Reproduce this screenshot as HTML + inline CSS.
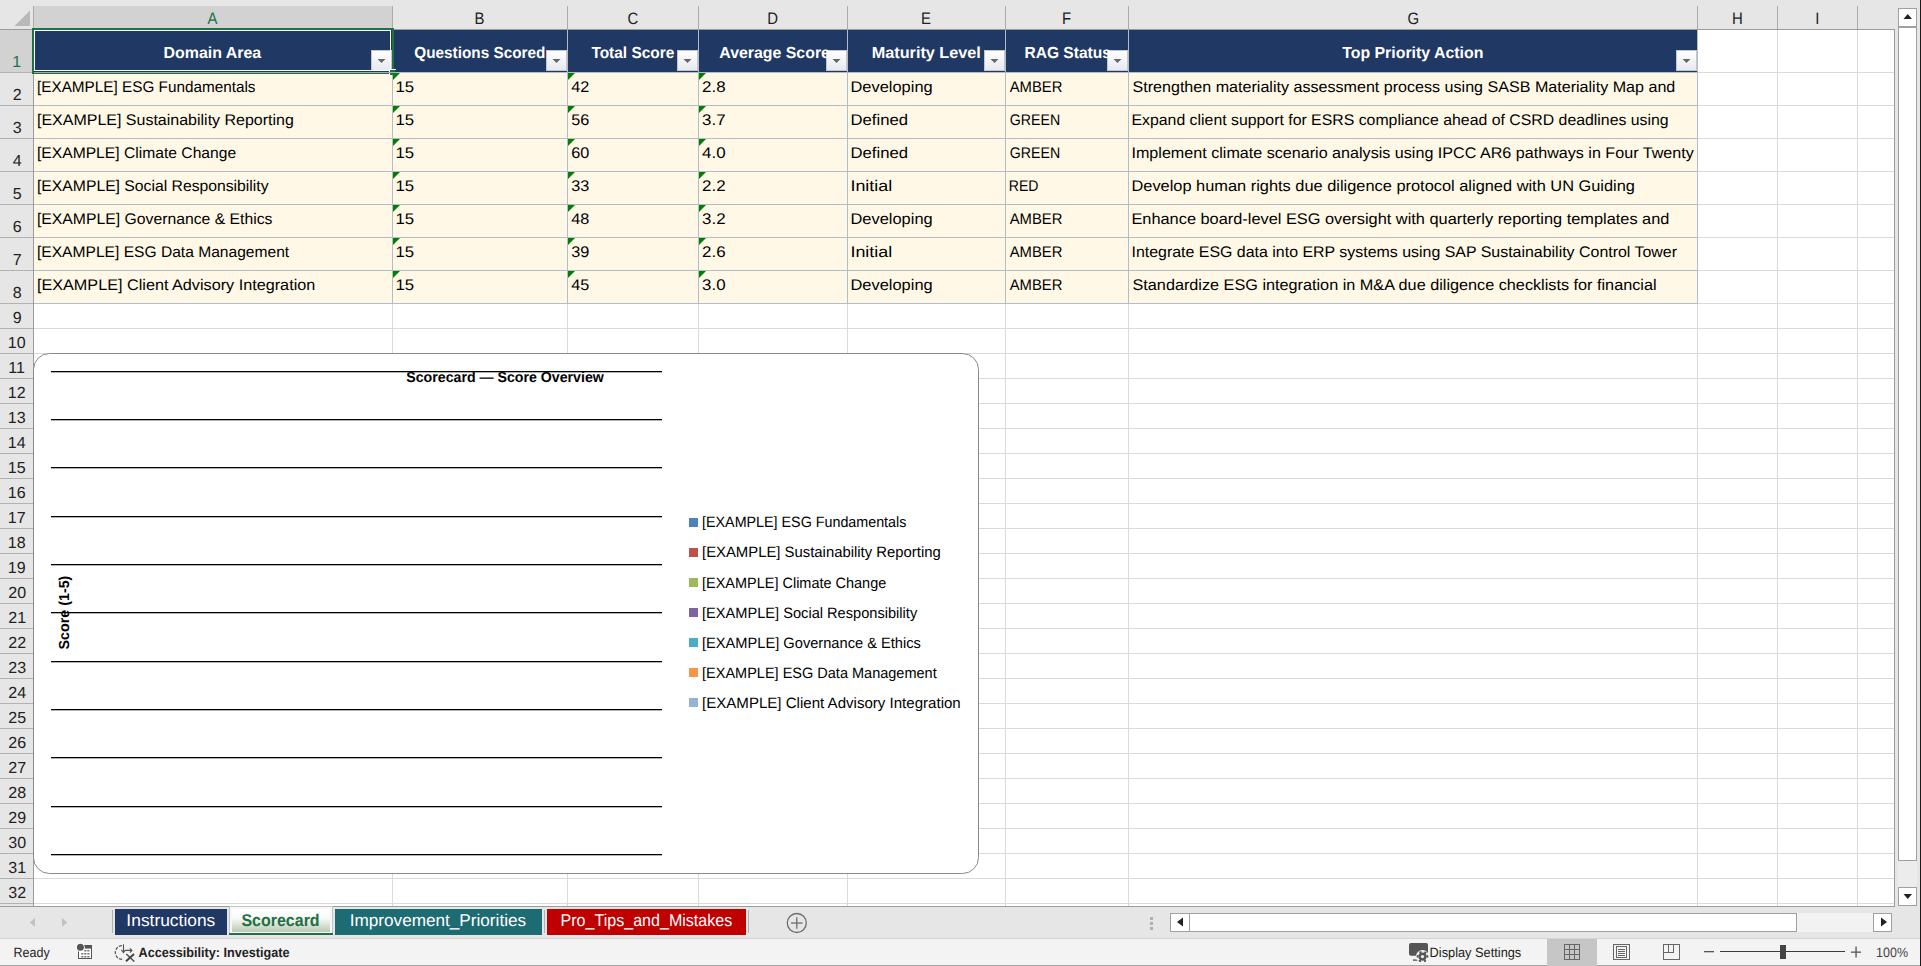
<!DOCTYPE html>
<html><head><meta charset="utf-8"><style>
html,body{margin:0;padding:0;width:1921px;height:966px;overflow:hidden;background:#e6e6e6;}
svg{display:block;font-family:"Liberation Sans", sans-serif;text-rendering:geometricPrecision;}
</style></head><body>
<svg width="1921" height="966" viewBox="0 0 1921 966">
<defs>
<linearGradient id="fg" x1="0" y1="0" x2="0" y2="1"><stop offset="0" stop-color="#ffffff"/><stop offset="1" stop-color="#e6e9f0"/></linearGradient>
<linearGradient id="tg" x1="0" y1="0" x2="0" y2="1"><stop offset="0" stop-color="#ffffff"/><stop offset="0.4" stop-color="#f8faf7"/><stop offset="1" stop-color="#b9c8b3"/></linearGradient>
</defs>
<rect x="0" y="0" width="1921" height="966" fill="#e6e6e6" />
<rect x="34" y="30" width="1860" height="876" fill="#ffffff" />
<rect x="392" y="30" width="1" height="876" fill="#dadada" />
<rect x="567" y="30" width="1" height="876" fill="#dadada" />
<rect x="698" y="30" width="1" height="876" fill="#dadada" />
<rect x="847" y="30" width="1" height="876" fill="#dadada" />
<rect x="1005" y="30" width="1" height="876" fill="#dadada" />
<rect x="1128" y="30" width="1" height="876" fill="#dadada" />
<rect x="1697" y="30" width="1" height="876" fill="#dadada" />
<rect x="1777" y="30" width="1" height="876" fill="#dadada" />
<rect x="1857" y="30" width="1" height="876" fill="#dadada" />
<rect x="34" y="72" width="1860" height="1" fill="#dadada" />
<rect x="34" y="105" width="1860" height="1" fill="#dadada" />
<rect x="34" y="138" width="1860" height="1" fill="#dadada" />
<rect x="34" y="171" width="1860" height="1" fill="#dadada" />
<rect x="34" y="204" width="1860" height="1" fill="#dadada" />
<rect x="34" y="237" width="1860" height="1" fill="#dadada" />
<rect x="34" y="270" width="1860" height="1" fill="#dadada" />
<rect x="34" y="303" width="1860" height="1" fill="#dadada" />
<rect x="34" y="328" width="1860" height="1" fill="#dadada" />
<rect x="34" y="353" width="1860" height="1" fill="#dadada" />
<rect x="34" y="378" width="1860" height="1" fill="#dadada" />
<rect x="34" y="403" width="1860" height="1" fill="#dadada" />
<rect x="34" y="428" width="1860" height="1" fill="#dadada" />
<rect x="34" y="453" width="1860" height="1" fill="#dadada" />
<rect x="34" y="478" width="1860" height="1" fill="#dadada" />
<rect x="34" y="503" width="1860" height="1" fill="#dadada" />
<rect x="34" y="528" width="1860" height="1" fill="#dadada" />
<rect x="34" y="553" width="1860" height="1" fill="#dadada" />
<rect x="34" y="578" width="1860" height="1" fill="#dadada" />
<rect x="34" y="603" width="1860" height="1" fill="#dadada" />
<rect x="34" y="628" width="1860" height="1" fill="#dadada" />
<rect x="34" y="653" width="1860" height="1" fill="#dadada" />
<rect x="34" y="678" width="1860" height="1" fill="#dadada" />
<rect x="34" y="703" width="1860" height="1" fill="#dadada" />
<rect x="34" y="728" width="1860" height="1" fill="#dadada" />
<rect x="34" y="753" width="1860" height="1" fill="#dadada" />
<rect x="34" y="778" width="1860" height="1" fill="#dadada" />
<rect x="34" y="803" width="1860" height="1" fill="#dadada" />
<rect x="34" y="828" width="1860" height="1" fill="#dadada" />
<rect x="34" y="853" width="1860" height="1" fill="#dadada" />
<rect x="34" y="878" width="1860" height="1" fill="#dadada" />
<rect x="34" y="903" width="1860" height="1" fill="#dadada" />
<rect x="34" y="30" width="1663" height="42" fill="#1f3864" />
<rect x="34" y="73" width="1663" height="230" fill="#fff8e6" />
<rect x="392" y="30" width="1" height="274" fill="#b4bcc8" />
<rect x="567" y="30" width="1" height="274" fill="#b4bcc8" />
<rect x="698" y="30" width="1" height="274" fill="#b4bcc8" />
<rect x="847" y="30" width="1" height="274" fill="#b4bcc8" />
<rect x="1005" y="30" width="1" height="274" fill="#b4bcc8" />
<rect x="1128" y="30" width="1" height="274" fill="#b4bcc8" />
<rect x="1697" y="30" width="1" height="274" fill="#b4bcc8" />
<rect x="34" y="72" width="1664" height="1" fill="#b4bcc8" />
<rect x="34" y="105" width="1664" height="1" fill="#b4bcc8" />
<rect x="34" y="138" width="1664" height="1" fill="#b4bcc8" />
<rect x="34" y="171" width="1664" height="1" fill="#b4bcc8" />
<rect x="34" y="204" width="1664" height="1" fill="#b4bcc8" />
<rect x="34" y="237" width="1664" height="1" fill="#b4bcc8" />
<rect x="34" y="270" width="1664" height="1" fill="#b4bcc8" />
<rect x="34" y="303" width="1664" height="1" fill="#b4bcc8" />
<rect x="33" y="6" width="359" height="23" fill="#d2d2d2" />
<rect x="33" y="6" width="1" height="23" fill="#ababab" />
<rect x="392" y="6" width="1" height="23" fill="#ababab" />
<rect x="567" y="6" width="1" height="23" fill="#ababab" />
<rect x="698" y="6" width="1" height="23" fill="#ababab" />
<rect x="847" y="6" width="1" height="23" fill="#ababab" />
<rect x="1005" y="6" width="1" height="23" fill="#ababab" />
<rect x="1128" y="6" width="1" height="23" fill="#ababab" />
<rect x="1697" y="6" width="1" height="23" fill="#ababab" />
<rect x="1777" y="6" width="1" height="23" fill="#ababab" />
<rect x="1857" y="6" width="1" height="23" fill="#ababab" />
<rect x="0" y="29" width="1894" height="1" fill="#9b9b9b" />
<rect x="1894" y="29" width="1" height="878" fill="#9b9b9b" />
<rect x="0" y="906" width="1895" height="1" fill="#9b9b9b" />
<rect x="0" y="30" width="33" height="876" fill="#e6e6e6" />
<rect x="0" y="30" width="33" height="42" fill="#d2d2d2" />
<rect x="33" y="29" width="1" height="877" fill="#9b9b9b" />
<rect x="0" y="72" width="33" height="1" fill="#b2b2b2" />
<rect x="0" y="105" width="33" height="1" fill="#b2b2b2" />
<rect x="0" y="138" width="33" height="1" fill="#b2b2b2" />
<rect x="0" y="171" width="33" height="1" fill="#b2b2b2" />
<rect x="0" y="204" width="33" height="1" fill="#b2b2b2" />
<rect x="0" y="237" width="33" height="1" fill="#b2b2b2" />
<rect x="0" y="270" width="33" height="1" fill="#b2b2b2" />
<rect x="0" y="303" width="33" height="1" fill="#b2b2b2" />
<rect x="0" y="328" width="33" height="1" fill="#b2b2b2" />
<rect x="0" y="353" width="33" height="1" fill="#b2b2b2" />
<rect x="0" y="378" width="33" height="1" fill="#b2b2b2" />
<rect x="0" y="403" width="33" height="1" fill="#b2b2b2" />
<rect x="0" y="428" width="33" height="1" fill="#b2b2b2" />
<rect x="0" y="453" width="33" height="1" fill="#b2b2b2" />
<rect x="0" y="478" width="33" height="1" fill="#b2b2b2" />
<rect x="0" y="503" width="33" height="1" fill="#b2b2b2" />
<rect x="0" y="528" width="33" height="1" fill="#b2b2b2" />
<rect x="0" y="553" width="33" height="1" fill="#b2b2b2" />
<rect x="0" y="578" width="33" height="1" fill="#b2b2b2" />
<rect x="0" y="603" width="33" height="1" fill="#b2b2b2" />
<rect x="0" y="628" width="33" height="1" fill="#b2b2b2" />
<rect x="0" y="653" width="33" height="1" fill="#b2b2b2" />
<rect x="0" y="678" width="33" height="1" fill="#b2b2b2" />
<rect x="0" y="703" width="33" height="1" fill="#b2b2b2" />
<rect x="0" y="728" width="33" height="1" fill="#b2b2b2" />
<rect x="0" y="753" width="33" height="1" fill="#b2b2b2" />
<rect x="0" y="778" width="33" height="1" fill="#b2b2b2" />
<rect x="0" y="803" width="33" height="1" fill="#b2b2b2" />
<rect x="0" y="828" width="33" height="1" fill="#b2b2b2" />
<rect x="0" y="853" width="33" height="1" fill="#b2b2b2" />
<rect x="0" y="878" width="33" height="1" fill="#b2b2b2" />
<rect x="0" y="903" width="33" height="1" fill="#b2b2b2" />
<polygon points="14.5,26 30,26 30,10.5" fill="#b9b9b9"/>
<rect x="371.5" y="50.5" width="20" height="20" fill="url(#fg)" stroke="#c3c6cc" stroke-width="1"/>
<polygon points="377.5,59 385.5,59 381.5,63" fill="#666"/>
<rect x="546.5" y="50.5" width="20" height="20" fill="url(#fg)" stroke="#c3c6cc" stroke-width="1"/>
<polygon points="552.5,59 560.5,59 556.5,63" fill="#666"/>
<rect x="677.5" y="50.5" width="20" height="20" fill="url(#fg)" stroke="#c3c6cc" stroke-width="1"/>
<polygon points="683.5,59 691.5,59 687.5,63" fill="#666"/>
<rect x="826.5" y="50.5" width="20" height="20" fill="url(#fg)" stroke="#c3c6cc" stroke-width="1"/>
<polygon points="832.5,59 840.5,59 836.5,63" fill="#666"/>
<rect x="984.5" y="50.5" width="20" height="20" fill="url(#fg)" stroke="#c3c6cc" stroke-width="1"/>
<polygon points="990.5,59 998.5,59 994.5,63" fill="#666"/>
<rect x="1107.5" y="50.5" width="20" height="20" fill="url(#fg)" stroke="#c3c6cc" stroke-width="1"/>
<polygon points="1113.5,59 1121.5,59 1117.5,63" fill="#666"/>
<rect x="1676.5" y="50.5" width="20" height="20" fill="url(#fg)" stroke="#c3c6cc" stroke-width="1"/>
<polygon points="1682.5,59 1690.5,59 1686.5,63" fill="#666"/>
<polygon points="393,73 400,73 393,80" fill="#008000"/>
<polygon points="568,73 575,73 568,80" fill="#008000"/>
<polygon points="699,73 706,73 699,80" fill="#008000"/>
<polygon points="393,106 400,106 393,113" fill="#008000"/>
<polygon points="568,106 575,106 568,113" fill="#008000"/>
<polygon points="699,106 706,106 699,113" fill="#008000"/>
<polygon points="393,139 400,139 393,146" fill="#008000"/>
<polygon points="568,139 575,139 568,146" fill="#008000"/>
<polygon points="699,139 706,139 699,146" fill="#008000"/>
<polygon points="393,172 400,172 393,179" fill="#008000"/>
<polygon points="568,172 575,172 568,179" fill="#008000"/>
<polygon points="699,172 706,172 699,179" fill="#008000"/>
<polygon points="393,205 400,205 393,212" fill="#008000"/>
<polygon points="568,205 575,205 568,212" fill="#008000"/>
<polygon points="699,205 706,205 699,212" fill="#008000"/>
<polygon points="393,238 400,238 393,245" fill="#008000"/>
<polygon points="568,238 575,238 568,245" fill="#008000"/>
<polygon points="699,238 706,238 699,245" fill="#008000"/>
<polygon points="393,271 400,271 393,278" fill="#008000"/>
<polygon points="568,271 575,271 568,278" fill="#008000"/>
<polygon points="699,271 706,271 699,278" fill="#008000"/>
<rect x="34.5" y="30.5" width="356" height="40" fill="none" stroke="#ffffff" stroke-width="1"/>
<rect x="32" y="28" width="362" height="46" fill="none" stroke="#1e7145" stroke-width="0" />
<rect x="32" y="28" width="362" height="2" fill="#1e7145" />
<rect x="32" y="72" width="362" height="2" fill="#1e7145" />
<rect x="32" y="28" width="2" height="46" fill="#1e7145" />
<rect x="392" y="28" width="2" height="46" fill="#1e7145" />
<rect x="389" y="69" width="7" height="1" fill="#ffffff" />
<rect x="389" y="69" width="1" height="7" fill="#ffffff" />
<rect x="390" y="70" width="5" height="5" fill="#1e7145" />
<rect x="34" y="72" width="361" height="1" fill="#a9a9a9" />
<rect x="33.5" y="353.5" width="945" height="520" rx="16" ry="16" fill="#ffffff" stroke="#8a8a8a" stroke-width="1"/>
<rect x="51" y="371" width="611" height="1.3" fill="#000000" />
<rect x="51" y="419" width="611" height="1.3" fill="#000000" />
<rect x="51" y="467" width="611" height="1.3" fill="#000000" />
<rect x="51" y="516" width="611" height="1.3" fill="#000000" />
<rect x="51" y="564" width="611" height="1.3" fill="#000000" />
<rect x="51" y="612" width="611" height="1.3" fill="#000000" />
<rect x="51" y="661" width="611" height="1.3" fill="#000000" />
<rect x="51" y="709" width="611" height="1.3" fill="#000000" />
<rect x="51" y="757" width="611" height="1.3" fill="#000000" />
<rect x="51" y="806" width="611" height="1.3" fill="#000000" />
<rect x="51" y="854" width="611" height="1.3" fill="#000000" />
<rect x="689" y="518" width="9" height="9" fill="#4f81bd" />
<rect x="689" y="548" width="9" height="9" fill="#c0504d" />
<rect x="689" y="578" width="9" height="9" fill="#9bbb59" />
<rect x="689" y="608" width="9" height="9" fill="#8064a2" />
<rect x="689" y="638" width="9" height="9" fill="#4bacc6" />
<rect x="689" y="668" width="9" height="9" fill="#f79646" />
<rect x="689" y="698" width="9" height="9" fill="#95b3d7" />
<rect x="1898.5" y="8.5" width="18" height="18" fill="#fff" stroke="#a0a0a0" stroke-width="1"/>
<polygon points="1903.5,19 1912,19 1907.75,14" fill="#222"/>
<rect x="1898.5" y="27.5" width="18" height="833" fill="#fff" stroke="#a0a0a0" stroke-width="1"/>
<rect x="1898" y="861" width="19" height="26" fill="#ececec" />
<rect x="1898.5" y="887.5" width="18" height="18" fill="#fff" stroke="#a0a0a0" stroke-width="1"/>
<polygon points="1903.5,894 1912,894 1907.75,899" fill="#222"/>
<rect x="1920" y="0" width="1" height="966" fill="#1a1a1a" />
<rect x="1150" y="917" width="3" height="3" fill="#b0b0b0" />
<rect x="1150" y="922" width="3" height="3" fill="#b0b0b0" />
<rect x="1150" y="927" width="3" height="3" fill="#b0b0b0" />
<rect x="1170.5" y="913.5" width="19" height="18" fill="#fff" stroke="#a0a0a0" stroke-width="1"/>
<polygon points="1183,917.5 1183,926.5 1177,922" fill="#222"/>
<rect x="1189.5" y="913.5" width="607" height="18" fill="#fff" stroke="#a0a0a0" stroke-width="1"/>
<rect x="1797" y="913" width="76" height="19" fill="#f2f2f2" />
<rect x="1873.5" y="913.5" width="18" height="18" fill="#fff" stroke="#a0a0a0" stroke-width="1"/>
<polygon points="1881,917.5 1881,926.5 1887,922" fill="#222"/>
<polygon points="35,917.8 35,927 29.8,922.4" fill="#c2c2c2"/>
<polygon points="62,917.8 62,927 67.2,922.4" fill="#c2c2c2"/>
<rect x="112" y="910" width="1" height="23" fill="#b0b0b0" />
<rect x="115" y="909" width="112" height="26" fill="#1f3864" />
<rect x="229.5" y="906.5" width="103" height="28" fill="#f7f7f7" stroke="#c4c4c4" stroke-width="1"/>
<rect x="232" y="909" width="98" height="23" fill="url(#tg)" />
<rect x="229" y="933" width="104" height="2" fill="#1e7145" />
<rect x="335" y="909" width="207" height="26" fill="#1d6b73" />
<rect x="544" y="910" width="1" height="23" fill="#b0b0b0" />
<rect x="547" y="909" width="199" height="26" fill="#c00000" />
<rect x="748" y="910" width="1" height="23" fill="#b0b0b0" />
<circle cx="796.8" cy="923" r="9.5" fill="none" stroke="#6e6e6e" stroke-width="1.3"/>
<rect x="791" y="922.4" width="11.6" height="1.3" fill="#6e6e6e" />
<rect x="796.15" y="917.2" width="1.3" height="11.6" fill="#6e6e6e" />
<rect x="0" y="938" width="1920" height="28" fill="#f3f3f3" />
<rect x="0" y="938" width="1920" height="1" fill="#d4d4d4" />
<rect x="0" y="965" width="1920" height="1" fill="#a5a5a5" />
<rect x="78" y="945" width="14" height="14" fill="#555" />
<rect x="79" y="948.6" width="12" height="9.4" fill="#ffffff" />
<rect x="79" y="945.6" width="12" height="0.01" fill="#555" />
<rect x="84.2" y="950.2" width="2.2" height="1.2" fill="#555" />
<rect x="87.3" y="950.2" width="2.2" height="1.2" fill="#555" />
<rect x="81.2" y="953.2" width="2.2" height="1.2" fill="#555" />
<rect x="84.2" y="953.2" width="2.2" height="1.2" fill="#555" />
<rect x="87.3" y="953.2" width="2.2" height="1.2" fill="#555" />
<rect x="81.2" y="956.2" width="2.2" height="1.2" fill="#555" />
<rect x="84.2" y="956.2" width="2.2" height="1.2" fill="#555" />
<rect x="87.3" y="956.2" width="2.2" height="1.2" fill="#555" />
<circle cx="80.4" cy="947.3" r="4.4" fill="#ffffff"/>
<circle cx="80.4" cy="947.3" r="3.5" fill="#555"/>
<path d="M121.9,945.6 A6.9,6.9 0 0 0 122.5,959.4" fill="none" stroke="#555" stroke-width="1.2" stroke-dasharray="3.2,1.3"/>
<path d="M123.5,944.2 V952 M121.4,949.8 L123.5,952.6 L125.6,949.8 M125.8,950.4 H131.5 M129.8,948.3 L132,950.4 L129.8,952.5" fill="none" stroke="#555" stroke-width="1.1"/>
<path d="M126,961.2 L134,954" fill="none" stroke="#444" stroke-width="2"/>
<path d="M126.3,954 L134.4,961.5" fill="none" stroke="#444" stroke-width="1.3"/>
<rect x="1409" y="943" width="19" height="12.8" rx="2" fill="#555"/>
<rect x="1413" y="959.4" width="4.8" height="1.4" fill="#555" />
<circle cx="1422.5" cy="956.6" r="6.6" fill="#f3f3f3"/>
<circle cx="1422.5" cy="956.6" r="4.1" fill="#555"/>
<circle cx="1422.5" cy="956.6" r="4.9" fill="none" stroke="#555" stroke-width="1.9" stroke-dasharray="2.2,2.93" transform="rotate(-15 1422.5 956.6)"/>
<circle cx="1422.5" cy="956.6" r="1.6" fill="#f3f3f3"/>
<rect x="1547" y="939" width="50" height="27" fill="#c6c6c6" />
<rect x="1564.5" y="944.5" width="15" height="15" fill="none" stroke="#666" stroke-width="1"/>
<rect x="1569" y="945" width="1" height="15" fill="#666" />
<rect x="1565" y="949" width="15" height="1" fill="#666" />
<rect x="1574" y="945" width="1" height="15" fill="#666" />
<rect x="1565" y="954" width="15" height="1" fill="#666" />
<rect x="1613.5" y="944.5" width="16" height="15" fill="none" stroke="#666" stroke-width="1"/>
<rect x="1616.5" y="946.5" width="10" height="11" fill="none" stroke="#666" stroke-width="1"/>
<rect x="1618" y="949" width="7" height="1" fill="#666" />
<rect x="1618" y="951" width="7" height="1" fill="#666" />
<rect x="1618" y="953" width="7" height="1" fill="#666" />
<rect x="1618" y="955" width="7" height="1" fill="#666" />
<rect x="1663.5" y="944.5" width="16" height="15" fill="none" stroke="#666" stroke-width="1"/>
<rect x="1664" y="952" width="10" height="1" fill="#666" />
<rect x="1668" y="945" width="1" height="8" fill="#666" />
<rect x="1673" y="945" width="1" height="8" fill="#666" />
<rect x="1704" y="951" width="10" height="1.3" fill="#555" />
<rect x="1720" y="951" width="125" height="1" fill="#3a3a3a" />
<rect x="1780" y="945" width="6" height="14" fill="#444" />
<rect x="1851" y="951.5" width="10" height="1.3" fill="#555" />
<rect x="1855.4" y="946.5" width="1.3" height="11" fill="#555" />
<text x="207.60" y="24" font-size="16.6" font-weight="400" fill="#217346" textLength="9.96" lengthAdjust="spacingAndGlyphs" >A</text>
<text x="474.60" y="24" font-size="16.6" font-weight="400" fill="#222" textLength="9.96" lengthAdjust="spacingAndGlyphs" >B</text>
<text x="627.60" y="24" font-size="16.6" font-weight="400" fill="#222" textLength="10.79" lengthAdjust="spacingAndGlyphs" >C</text>
<text x="767.15" y="24" font-size="16.6" font-weight="400" fill="#222" textLength="10.79" lengthAdjust="spacingAndGlyphs" >D</text>
<text x="921.10" y="24" font-size="16.6" font-weight="400" fill="#222" textLength="9.96" lengthAdjust="spacingAndGlyphs" >E</text>
<text x="1062.05" y="24" font-size="16.6" font-weight="400" fill="#222" textLength="9.12" lengthAdjust="spacingAndGlyphs" >F</text>
<text x="1407.60" y="24" font-size="16.6" font-weight="400" fill="#222" textLength="11.62" lengthAdjust="spacingAndGlyphs" >G</text>
<text x="1732.10" y="24" font-size="16.6" font-weight="400" fill="#222" textLength="10.79" lengthAdjust="spacingAndGlyphs" >H</text>
<text x="1815.25" y="24" font-size="16.6" font-weight="400" fill="#222" textLength="4.15" lengthAdjust="spacingAndGlyphs" >I</text>
<text x="12.20" y="67" font-size="16" font-weight="400" fill="#217346"  >1</text>
<text x="12.70" y="100" font-size="16" font-weight="400" fill="#222"  >2</text>
<text x="12.70" y="133" font-size="16" font-weight="400" fill="#222"  >3</text>
<text x="12.70" y="166" font-size="16" font-weight="400" fill="#222"  >4</text>
<text x="12.70" y="199" font-size="16" font-weight="400" fill="#222"  >5</text>
<text x="12.70" y="232" font-size="16" font-weight="400" fill="#222"  >6</text>
<text x="12.70" y="265" font-size="16" font-weight="400" fill="#222"  >7</text>
<text x="12.70" y="298" font-size="16" font-weight="400" fill="#222"  >8</text>
<text x="12.70" y="323" font-size="16" font-weight="400" fill="#222"  >9</text>
<text x="7.75" y="348" font-size="16" font-weight="400" fill="#222"  >10</text>
<text x="8.34" y="373" font-size="16" font-weight="400" fill="#222"  >11</text>
<text x="7.75" y="398" font-size="16" font-weight="400" fill="#222"  >12</text>
<text x="7.75" y="423" font-size="16" font-weight="400" fill="#222"  >13</text>
<text x="7.75" y="448" font-size="16" font-weight="400" fill="#222"  >14</text>
<text x="7.75" y="473" font-size="16" font-weight="400" fill="#222"  >15</text>
<text x="7.75" y="498" font-size="16" font-weight="400" fill="#222"  >16</text>
<text x="7.75" y="523" font-size="16" font-weight="400" fill="#222"  >17</text>
<text x="7.75" y="548" font-size="16" font-weight="400" fill="#222"  >18</text>
<text x="7.75" y="573" font-size="16" font-weight="400" fill="#222"  >19</text>
<text x="8.25" y="598" font-size="16" font-weight="400" fill="#222"  >20</text>
<text x="8.25" y="623" font-size="16" font-weight="400" fill="#222"  >21</text>
<text x="8.25" y="648" font-size="16" font-weight="400" fill="#222"  >22</text>
<text x="8.25" y="673" font-size="16" font-weight="400" fill="#222"  >23</text>
<text x="8.25" y="698" font-size="16" font-weight="400" fill="#222"  >24</text>
<text x="8.25" y="723" font-size="16" font-weight="400" fill="#222"  >25</text>
<text x="8.25" y="748" font-size="16" font-weight="400" fill="#222"  >26</text>
<text x="8.25" y="773" font-size="16" font-weight="400" fill="#222"  >27</text>
<text x="8.25" y="798" font-size="16" font-weight="400" fill="#222"  >28</text>
<text x="8.25" y="823" font-size="16" font-weight="400" fill="#222"  >29</text>
<text x="8.25" y="848" font-size="16" font-weight="400" fill="#222"  >30</text>
<text x="8.25" y="873" font-size="16" font-weight="400" fill="#222"  >31</text>
<text x="8.25" y="898" font-size="16" font-weight="400" fill="#222"  >32</text>
<text x="163.51" y="58" font-size="16" font-weight="700" fill="#ffffff" textLength="97.69" lengthAdjust="spacingAndGlyphs" >Domain Area</text>
<text x="414.30" y="58" font-size="16" font-weight="700" fill="#ffffff" textLength="131.04" lengthAdjust="spacingAndGlyphs" >Questions Scored</text>
<text x="591.40" y="58" font-size="16" font-weight="700" fill="#ffffff" textLength="83.00" lengthAdjust="spacingAndGlyphs" >Total Score</text>
<text x="719.30" y="58" font-size="16" font-weight="700" fill="#ffffff" textLength="110.60" lengthAdjust="spacingAndGlyphs" >Average Score</text>
<text x="871.69" y="58" font-size="16" font-weight="700" fill="#ffffff" textLength="109.17" lengthAdjust="spacingAndGlyphs" >Maturity Level</text>
<text x="1024.43" y="58" font-size="16" font-weight="700" fill="#ffffff" textLength="86.47" lengthAdjust="spacingAndGlyphs" >RAG Status</text>
<text x="1342.20" y="58" font-size="16" font-weight="700" fill="#ffffff" textLength="141.16" lengthAdjust="spacingAndGlyphs" >Top Priority Action</text>
<text x="37.01" y="92" font-size="15.4" font-weight="400" fill="#000" textLength="218.49" lengthAdjust="spacingAndGlyphs" >[EXAMPLE] ESG Fundamentals</text>
<text x="395.51" y="92" font-size="15.4" font-weight="400" fill="#000" textLength="18.70" lengthAdjust="spacingAndGlyphs" >15</text>
<text x="571.20" y="92" font-size="15.4" font-weight="400" fill="#000" textLength="18.09" lengthAdjust="spacingAndGlyphs" >42</text>
<text x="702.10" y="92" font-size="15.4" font-weight="400" fill="#000" textLength="23.51" lengthAdjust="spacingAndGlyphs" >2.8</text>
<text x="850.53" y="92" font-size="15.4" font-weight="400" fill="#000" textLength="82.16" lengthAdjust="spacingAndGlyphs" >Developing</text>
<text x="1009.70" y="92" font-size="15.4" font-weight="400" fill="#000" textLength="52.71" lengthAdjust="spacingAndGlyphs" >AMBER</text>
<text x="1132.50" y="92" font-size="15.4" font-weight="400" fill="#000" textLength="542.78" lengthAdjust="spacingAndGlyphs" >Strengthen materiality assessment process using SASB Materiality Map and</text>
<text x="36.96" y="125" font-size="15.4" font-weight="400" fill="#000" textLength="256.92" lengthAdjust="spacingAndGlyphs" >[EXAMPLE] Sustainability Reporting</text>
<text x="395.51" y="125" font-size="15.4" font-weight="400" fill="#000" textLength="18.70" lengthAdjust="spacingAndGlyphs" >15</text>
<text x="571.20" y="125" font-size="15.4" font-weight="400" fill="#000" textLength="18.09" lengthAdjust="spacingAndGlyphs" >56</text>
<text x="702.10" y="125" font-size="15.4" font-weight="400" fill="#000" textLength="23.51" lengthAdjust="spacingAndGlyphs" >3.7</text>
<text x="850.51" y="125" font-size="15.4" font-weight="400" fill="#000" textLength="57.59" lengthAdjust="spacingAndGlyphs" >Defined</text>
<text x="1009.70" y="125" font-size="15.4" font-weight="400" fill="#000" textLength="50.43" lengthAdjust="spacingAndGlyphs" >GREEN</text>
<text x="1131.47" y="125" font-size="15.4" font-weight="400" fill="#000" textLength="537.21" lengthAdjust="spacingAndGlyphs" >Expand client support for ESRS compliance ahead of CSRD deadlines using</text>
<text x="36.98" y="158" font-size="15.4" font-weight="400" fill="#000" textLength="199.19" lengthAdjust="spacingAndGlyphs" >[EXAMPLE] Climate Change</text>
<text x="395.51" y="158" font-size="15.4" font-weight="400" fill="#000" textLength="18.70" lengthAdjust="spacingAndGlyphs" >15</text>
<text x="571.20" y="158" font-size="15.4" font-weight="400" fill="#000" textLength="18.09" lengthAdjust="spacingAndGlyphs" >60</text>
<text x="702.10" y="158" font-size="15.4" font-weight="400" fill="#000" textLength="23.51" lengthAdjust="spacingAndGlyphs" >4.0</text>
<text x="850.51" y="158" font-size="15.4" font-weight="400" fill="#000" textLength="57.59" lengthAdjust="spacingAndGlyphs" >Defined</text>
<text x="1009.70" y="158" font-size="15.4" font-weight="400" fill="#000" textLength="50.43" lengthAdjust="spacingAndGlyphs" >GREEN</text>
<text x="1131.45" y="158" font-size="15.4" font-weight="400" fill="#000" textLength="562.33" lengthAdjust="spacingAndGlyphs" >Implement climate scenario analysis using IPCC AR6 pathways in Four Twenty</text>
<text x="36.98" y="191" font-size="15.4" font-weight="400" fill="#000" textLength="231.61" lengthAdjust="spacingAndGlyphs" >[EXAMPLE] Social Responsibility</text>
<text x="395.51" y="191" font-size="15.4" font-weight="400" fill="#000" textLength="18.70" lengthAdjust="spacingAndGlyphs" >15</text>
<text x="571.20" y="191" font-size="15.4" font-weight="400" fill="#000" textLength="18.09" lengthAdjust="spacingAndGlyphs" >33</text>
<text x="702.10" y="191" font-size="15.4" font-weight="400" fill="#000" textLength="23.51" lengthAdjust="spacingAndGlyphs" >2.2</text>
<text x="850.44" y="191" font-size="15.4" font-weight="400" fill="#000" textLength="41.75" lengthAdjust="spacingAndGlyphs" >Initial</text>
<text x="1008.79" y="191" font-size="15.4" font-weight="400" fill="#000" textLength="29.72" lengthAdjust="spacingAndGlyphs" >RED</text>
<text x="1131.44" y="191" font-size="15.4" font-weight="400" fill="#000" textLength="503.56" lengthAdjust="spacingAndGlyphs" >Develop human rights due diligence protocol aligned with UN Guiding</text>
<text x="36.98" y="224" font-size="15.4" font-weight="400" fill="#000" textLength="235.51" lengthAdjust="spacingAndGlyphs" >[EXAMPLE] Governance &amp; Ethics</text>
<text x="395.51" y="224" font-size="15.4" font-weight="400" fill="#000" textLength="18.70" lengthAdjust="spacingAndGlyphs" >15</text>
<text x="571.20" y="224" font-size="15.4" font-weight="400" fill="#000" textLength="18.09" lengthAdjust="spacingAndGlyphs" >48</text>
<text x="702.10" y="224" font-size="15.4" font-weight="400" fill="#000" textLength="23.51" lengthAdjust="spacingAndGlyphs" >3.2</text>
<text x="850.53" y="224" font-size="15.4" font-weight="400" fill="#000" textLength="82.16" lengthAdjust="spacingAndGlyphs" >Developing</text>
<text x="1009.70" y="224" font-size="15.4" font-weight="400" fill="#000" textLength="52.71" lengthAdjust="spacingAndGlyphs" >AMBER</text>
<text x="1131.44" y="224" font-size="15.4" font-weight="400" fill="#000" textLength="537.96" lengthAdjust="spacingAndGlyphs" >Enhance board-level ESG oversight with quarterly reporting templates and</text>
<text x="36.99" y="257" font-size="15.4" font-weight="400" fill="#000" textLength="252.18" lengthAdjust="spacingAndGlyphs" >[EXAMPLE] ESG Data Management</text>
<text x="395.51" y="257" font-size="15.4" font-weight="400" fill="#000" textLength="18.70" lengthAdjust="spacingAndGlyphs" >15</text>
<text x="571.20" y="257" font-size="15.4" font-weight="400" fill="#000" textLength="18.09" lengthAdjust="spacingAndGlyphs" >39</text>
<text x="702.10" y="257" font-size="15.4" font-weight="400" fill="#000" textLength="23.51" lengthAdjust="spacingAndGlyphs" >2.6</text>
<text x="850.44" y="257" font-size="15.4" font-weight="400" fill="#000" textLength="41.75" lengthAdjust="spacingAndGlyphs" >Initial</text>
<text x="1009.70" y="257" font-size="15.4" font-weight="400" fill="#000" textLength="52.71" lengthAdjust="spacingAndGlyphs" >AMBER</text>
<text x="1131.47" y="257" font-size="15.4" font-weight="400" fill="#000" textLength="545.56" lengthAdjust="spacingAndGlyphs" >Integrate ESG data into ERP systems using SAP Sustainability Control Tower</text>
<text x="36.95" y="290" font-size="15.4" font-weight="400" fill="#000" textLength="278.34" lengthAdjust="spacingAndGlyphs" >[EXAMPLE] Client Advisory Integration</text>
<text x="395.51" y="290" font-size="15.4" font-weight="400" fill="#000" textLength="18.70" lengthAdjust="spacingAndGlyphs" >15</text>
<text x="571.20" y="290" font-size="15.4" font-weight="400" fill="#000" textLength="18.09" lengthAdjust="spacingAndGlyphs" >45</text>
<text x="702.10" y="290" font-size="15.4" font-weight="400" fill="#000" textLength="23.51" lengthAdjust="spacingAndGlyphs" >3.0</text>
<text x="850.53" y="290" font-size="15.4" font-weight="400" fill="#000" textLength="82.16" lengthAdjust="spacingAndGlyphs" >Developing</text>
<text x="1009.70" y="290" font-size="15.4" font-weight="400" fill="#000" textLength="52.71" lengthAdjust="spacingAndGlyphs" >AMBER</text>
<text x="1132.50" y="290" font-size="15.4" font-weight="400" fill="#000" textLength="524.04" lengthAdjust="spacingAndGlyphs" >Standardize ESG integration in M&amp;A due diligence checklists for financial</text>
<text x="406.30" y="381.8" font-size="14.5" font-weight="700" fill="#000" textLength="197.50" lengthAdjust="spacingAndGlyphs" >Scorecard — Score Overview</text>
<text x="0.00" y="0" transform="translate(69 649.4) rotate(-90)" font-size="14.5" font-weight="700" fill="#000" textLength="73.73" lengthAdjust="spacingAndGlyphs" >Score (1-5)</text>
<text x="702.05" y="527.3" font-size="15" font-weight="400" fill="#000" textLength="204.33" lengthAdjust="spacingAndGlyphs" >[EXAMPLE] ESG Fundamentals</text>
<text x="702.01" y="557.4" font-size="15" font-weight="400" fill="#000" textLength="238.73" lengthAdjust="spacingAndGlyphs" >[EXAMPLE] Sustainability Reporting</text>
<text x="702.04" y="587.6" font-size="15" font-weight="400" fill="#000" textLength="184.20" lengthAdjust="spacingAndGlyphs" >[EXAMPLE] Climate Change</text>
<text x="702.03" y="617.8" font-size="15" font-weight="400" fill="#000" textLength="215.19" lengthAdjust="spacingAndGlyphs" >[EXAMPLE] Social Responsibility</text>
<text x="702.02" y="647.9" font-size="15" font-weight="400" fill="#000" textLength="218.86" lengthAdjust="spacingAndGlyphs" >[EXAMPLE] Governance &amp; Ethics</text>
<text x="702.03" y="678.0" font-size="15" font-weight="400" fill="#000" textLength="234.66" lengthAdjust="spacingAndGlyphs" >[EXAMPLE] ESG Data Management</text>
<text x="702.00" y="708.2" font-size="15" font-weight="400" fill="#000" textLength="258.74" lengthAdjust="spacingAndGlyphs" >[EXAMPLE] Client Advisory Integration</text>
<text x="126.38" y="925.7" font-size="17" font-weight="400" fill="#fff" textLength="88.93" lengthAdjust="spacingAndGlyphs" >Instructions</text>
<text x="241.40" y="925.7" font-size="17" font-weight="700" fill="#1e7145" textLength="78.26" lengthAdjust="spacingAndGlyphs" >Scorecard</text>
<text x="349.69" y="925.7" font-size="17" font-weight="400" fill="#fff" textLength="176.41" lengthAdjust="spacingAndGlyphs" >Improvement_Priorities</text>
<text x="560.56" y="925.7" font-size="17" font-weight="400" fill="#fff" textLength="171.72" lengthAdjust="spacingAndGlyphs" >Pro_Tips_and_Mistakes</text>
<text x="13.57" y="957" font-size="13.5" font-weight="400" fill="#262626" textLength="36.20" lengthAdjust="spacingAndGlyphs" >Ready</text>
<text x="138.50" y="957" font-size="13.5" font-weight="700" fill="#222" textLength="151.04" lengthAdjust="spacingAndGlyphs" >Accessibility: Investigate</text>
<text x="1429.55" y="957" font-size="13.5" font-weight="400" fill="#222" textLength="91.71" lengthAdjust="spacingAndGlyphs" >Display Settings</text>
<text x="1876.08" y="957" font-size="13.5" font-weight="400" fill="#444" textLength="31.93" lengthAdjust="spacingAndGlyphs" >100%</text>
</svg></body></html>
